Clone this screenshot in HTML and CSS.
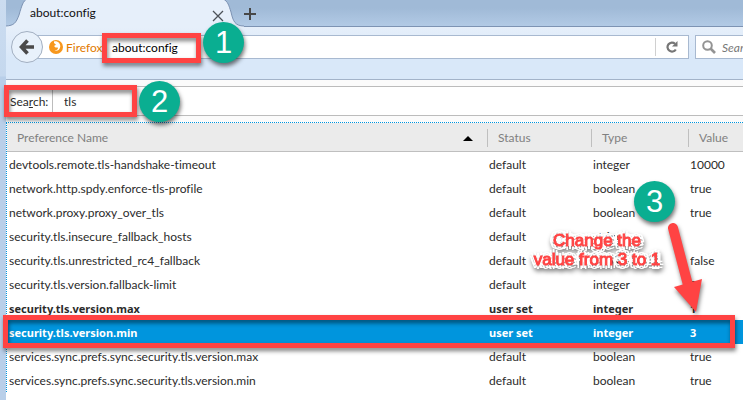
FILE: index.html
```html
<!DOCTYPE html>
<html lang="en">
<head>
<meta charset="utf-8">
<title>about:config</title>
<link rel="stylesheet" href="styles.css">
</head>
<body>
<div class="window">
  <header class="tabs">
    <div class="tab">
      <svg class="tab-shape" viewBox="0 0 238 27" preserveAspectRatio="none" aria-hidden="true">
        <path d="M0 27V26C8 25.500 10 23 13 15C16 5 17 1 21 -1H217C222 1 223 6 225 12C227 21 229 26 238 26V27Z" fill="#e6effa"/>
        <path d="M0 26C8 25.500 10 23 13 15C16 5 17 1 21 -1M217 -1C222 1 223 6 225 12C227 21 229 26 238 26" fill="none" stroke="#7d93b3"/>
      </svg>
      <span class="tab-title">about:config</span>
      <button class="tab-close" aria-label="Close tab"><svg width="12" height="12" viewBox="0 0 12 12"><path d="M1 1L11 11M11 1L1 11" stroke="#4c5158" stroke-width="1.300"/></svg></button>
    </div>
    <button class="tab-new" aria-label="New tab"><svg width="12" height="12" viewBox="0 0 12 12"><path d="M6 0V12M0 6H12" stroke="#474747" stroke-width="2"/></svg></button>
  </header>
  <nav class="toolbar">
    <button class="back" aria-label="Back"><svg width="16" height="16" viewBox="0 0 16 16"><path d="M8.500 1.500L2.500 8L8.500 14.500M3 8H15" fill="none" stroke="#4a4a4a" stroke-width="3.600"/></svg></button>
    <div class="address">
      <svg class="fox" width="14" height="14" viewBox="0 0 14 14" aria-hidden="true"><circle cx="7" cy="7" r="7" fill="#f7971d"/><path d="M5 1.500C8 .5 11.500 3 11.300 6.500C11 10 8 11.500 5.500 10.500C8 10.300 9.500 9 8.800 7.500L6.500 7.500L5 6L7 4.700L5 3Z" fill="#fff"/></svg>
      <span class="brand">Firefox</span>
      <input class="url" aria-label="Address" value="about:config">
      <button class="reload" aria-label="Reload"><svg width="12" height="12" viewBox="0 0 12 12"><path d="M9 2.700A4.500 4.500 0 1 0 9.800 8.500" fill="none" stroke="#767676" stroke-width="2.200"/><path d="M11.500 0V5.500H6Z" fill="#767676"/></svg></button>
    </div>
    <div class="websearch">
      <svg width="14" height="14" viewBox="0 0 14 14" aria-hidden="true"><circle cx="5.500" cy="5.500" r="4.300" fill="none" stroke="#939393" stroke-width="2"/><path d="M8.500 8.500L13 13" stroke="#939393" stroke-width="2.600"/></svg>
      <input aria-label="Web search" placeholder="Search">
    </div>
  </nav>
  <main class="content">
    <div class="filter">
      <label for="filter">Sea<u>r</u>ch:</label>
      <input id="filter" value="tls">
    </div>
    <table class="prefs">
      <colgroup><col><col class="c-status"><col class="c-type"><col class="c-value"></colgroup>
      <thead><tr><th><span class="sorted">Preference Name</span></th><th><span>Status</span></th><th><span>Type</span></th><th><span>Value</span></th></tr></thead>
      <tbody>
        <tr><td>devtools.remote.tls-handshake-timeout</td><td>default</td><td>integer</td><td>10000</td></tr>
        <tr><td>network.http.spdy.enforce-tls-profile</td><td>default</td><td>boolean</td><td>true</td></tr>
        <tr><td>network.proxy.proxy_over_tls</td><td>default</td><td>boolean</td><td>true</td></tr>
        <tr><td>security.tls.insecure_fallback_hosts</td><td>default</td><td>string</td><td></td></tr>
        <tr><td>security.tls.unrestricted_rc4_fallback</td><td>default</td><td>boolean</td><td>false</td></tr>
        <tr><td>security.tls.version.fallback-limit</td><td>default</td><td>integer</td><td>3</td></tr>
        <tr class="changed"><td>security.tls.version.max</td><td>user set</td><td>integer</td><td>1</td></tr>
        <tr class="changed selected"><td>security.tls.version.min</td><td>user set</td><td>integer</td><td>3</td></tr>
        <tr><td>services.sync.prefs.sync.security.tls.version.max</td><td>default</td><td>boolean</td><td>true</td></tr>
        <tr><td>services.sync.prefs.sync.security.tls.version.min</td><td>default</td><td>boolean</td><td>true</td></tr>
      </tbody>
    </table>
  </main>
</div>
<div class="frame frame-url"></div>
<div class="frame frame-filter"></div>
<div class="frame frame-row"></div>
<div class="step step-1">1</div>
<div class="step step-2">2</div>
<svg class="arrow" width="50" height="100" viewBox="0 0 50 100" aria-hidden="true"><path d="M12 9L27 66" fill="none" stroke="#ff4343" stroke-width="10" stroke-linecap="round"/><path d="M13 68L41 60L35 93Z" fill="#ff4343"/></svg>
<div class="step step-3">3</div>
<p class="callout">Change the<br>value from 3 to 1</p>
</body>
</html>
```
FILE: styles.css
```css
* { box-sizing: border-box; }
body {
  position: relative;
  margin: 0;
  min-height: 100vh;
  overflow: hidden;
  padding-left: 6px;
  background: linear-gradient(#cbdcf0, #c5d8ee 76px, #b9cfe9 77px);
  font: 12px/16px Lato, sans-serif;
  font-variant-ligatures: none;
  color: #2b2b2b;
}
button, input { margin: 0; padding: 0; border: 0; background: none; font: inherit; color: inherit; outline: 0; }
button svg { display: block; }
.window { min-height: 100vh; background: #fff; }
.tabs { display: flex; height: 27px; background: linear-gradient(#a0bad7 30%, #b3cbe6); box-shadow: inset 0 -1px #7d93b3; }
.tab { position: relative; display: flex; justify-content: space-between; flex: 0 0 238px; padding: 5px 20px 0 24px; color: #111; }
.tab-shape { position: absolute; inset: 0; width: 100%; height: 100%; }
.tab-title { position: relative; }
.tab-close { position: relative; align-self: center; width: 12px; height: 12px; }
.tab-new { width: 12px; height: 27px; }
.toolbar { display: flex; height: 53px; padding-top: 8px; border-bottom: 1px solid #a3b3c9; background: linear-gradient(#e6effa, #d9e8f9 60%); }
.back { position: relative; display: grid; place-items: center; width: 32px; height: 32px; margin: -4px -16px 0 5px; border: 1px solid #a2afc1; border-radius: 50%; background: #e8f1fb; }
.address { display: flex; align-items: center; flex: 1; height: 24px; padding-left: 21px; border: 1px solid #a8b9d0; background: #fff; }
.fox { flex: none; }
.brand { flex: none; width: 43px; padding: 2px 0 0 3px; color: #e27a00; }
.url { flex: 1; min-width: 0; color: #000; padding: 2px 0 0 6px; }
.reload { display: grid; place-items: center; width: 33px; height: 18px; border-left: 1px solid #d0d0d0; }
.websearch { display: flex; align-items: center; gap: 6px; width: 48px; height: 24px; margin-left: 6px; padding-left: 6px; border: 1px solid #a8b9d0; border-right: 0; background: #fff; }
.websearch svg { flex: none; }
.websearch input { width: 24px; padding-top: 2px; font-style: italic; }
.websearch input::placeholder { color: #777; opacity: 1; }
.content { padding-top: 6px; background: #fbfbfb; }
.filter { display: flex; align-items: center; height: 30px; margin-bottom: 6px; border: solid #bcbcbc; border-width: 1px 0; background: #fff; }
.filter label { width: 47px; padding: 2px 0 0 4px; line-height: 26px; border-right: 1px solid #bcbcbc; }
.filter input { flex: 1; height: 28px; padding-left: 11px; }
.prefs { width: 100%; border-collapse: separate; border-spacing: 0; table-layout: fixed; border: dotted #0095dd; border-width: 1px 0 0 1px; background: #fff; }
.c-status { width: 104px; }
.c-type { width: 97px; }
.c-value { width: 55px; }
.prefs th { height: 29px; padding: 2px 0 0; border-bottom: 1px solid #bfbfbf; background: #ebebeb; color: #808080; font-weight: 400; text-align: left; }
.prefs th span { display: block; padding-left: 10px; line-height: 18px; border-left: 1px solid #bfbfbf; }
.prefs th .sorted { display: flex; align-items: center; justify-content: space-between; padding-right: 14px; border-left: 0; }
.sorted::after { content: ""; border: solid transparent; border-width: 0 5px 5px; border-bottom-color: #000; }
.prefs td { height: 24px; padding: 2px 2px 0; white-space: nowrap; overflow: hidden; }
.changed { font: 700 11px/16px "Noto Sans", sans-serif; }
.prefs .selected { background: #0095dd; color: #fff; }
.frame { position: absolute; border: 5px solid #ff4343; filter: drop-shadow(1px 3px 2px rgba(0,0,0,.5)); }
.frame-url { left: 102px; top: 33px; width: 99px; height: 30px; }
.frame-filter { left: 4px; top: 85px; width: 133px; height: 32px; }
.frame-row { left: 3px; top: 315px; right: 8px; height: 33px; }
.step { position: absolute; width: 41px; height: 41px; border-radius: 50%; background: #0aae91; color: #fff; font: 31px/41px "Liberation Sans", sans-serif; text-align: center; box-shadow: 1px 3px 4px rgba(0,0,0,.55); }
.step-1 { left: 203px; top: 22px; }
.step-2 { left: 139px; top: 81px; }
.step-3 { left: 634px; top: 181px; }
.arrow { position: absolute; left: 661px; top: 219px; filter: drop-shadow(1px 3px 2px rgba(0,0,0,.5)); }
.callout {
  position: absolute; left: 532px; top: 231px; width: 130px; margin: 0;
  color: #ff4343; font: 17px/19px "Liberation Sans", sans-serif; text-align: center; white-space: nowrap;
  -webkit-text-stroke: 1px #ff4343;
  text-shadow: 4px 0 #fff, -4px 0 #fff, 0 4px #fff, 0 -4px #fff, 3px 3px #fff, -3px 3px #fff, 3px -3px #fff, -3px -3px #fff;
  filter: drop-shadow(1px 3px 2px rgba(0,0,0,.5));
}
```
